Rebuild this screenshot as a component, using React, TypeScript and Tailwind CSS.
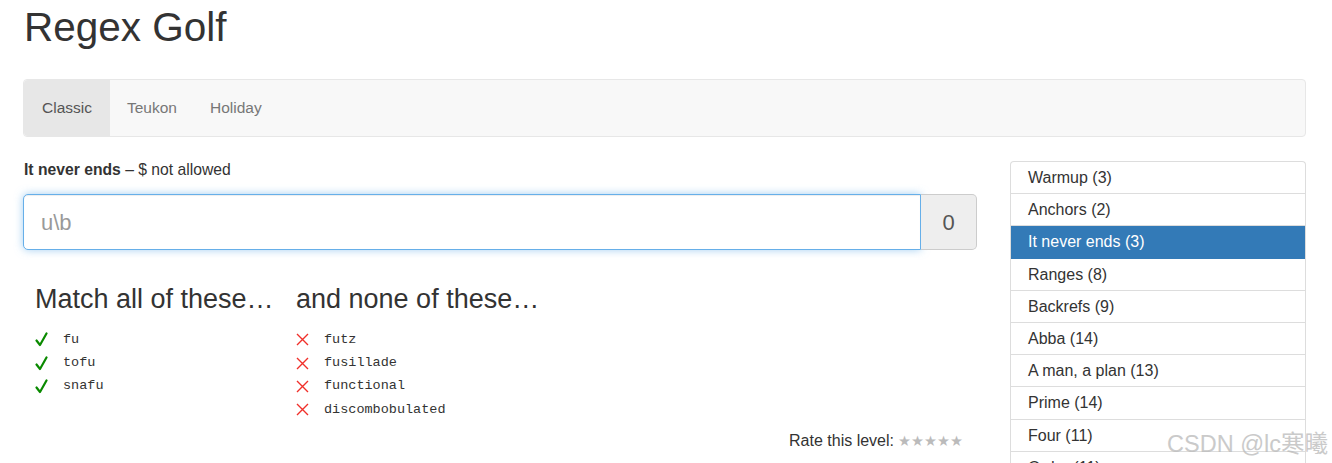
import React from "react";

const levels = [
  "Warmup (3)",
  "Anchors (2)",
  "It never ends (3)",
  "Ranges (8)",
  "Backrefs (9)",
  "Abba (14)",
  "A man, a plan (13)",
  "Prime (14)",
  "Four (11)",
  "Order (11)",
];

const matches = ["fu", "tofu", "snafu"];
const rejects = ["futz", "fusillade", "functional", "discombobulated"];

function Check() {
  return (
    <svg width="13" height="15" viewBox="0 0 13 15" className="shrink-0">
      <path d="M1.5 8.5L5 13L11.5 1.5" stroke="#0a8a00" strokeWidth="2.2" fill="none" strokeLinecap="round" strokeLinejoin="round" />
    </svg>
  );
}

function Cross() {
  return (
    <svg width="13" height="13" viewBox="0 0 13 13" className="shrink-0">
      <path d="M1 1L12 12M12 1L1 12" stroke="#f0302a" strokeWidth="1.4" fill="none" />
    </svg>
  );
}

export default function App() {
  return (
    <div className="relative min-h-[463px] bg-white pl-[23px] pr-[26px] font-['Liberation_Sans',Arial,sans-serif] text-[#333]">
      <h1 className="mt-[5px] pl-px text-[40.5px] leading-[45px] font-normal text-[#333]">Regex Golf</h1>

      <nav className="mt-[29px] flex h-[58px] rounded-[4px] border border-[#e7e7e7] bg-[#f8f8f8] text-[15.5px] text-[#777]">
        <a className="flex items-center rounded-l-[4px] bg-[#e7e7e7] px-[18px] text-[#555]">Classic</a>
        <a className="flex items-center px-[17px]">Teukon</a>
        <a className="flex items-center px-[16px]">Holiday</a>
      </nav>

      <div className="flex gap-[33px]">
        <div className="w-[954px]">
          <p className="mt-[22px] pl-px text-[15.7px] leading-[22px]">
            <b>It never ends</b> – $ not allowed
          </p>

          <div className="mt-[13px] flex h-[56px]">
            <div className="flex flex-1 items-center rounded-l-[5px] border border-[#66afe9] bg-white px-[17px] shadow-[inset_0_1px_1px_rgba(0,0,0,.075),0_0_8px_rgba(102,175,233,.6)]">
              <span className="text-[22px] text-[#999]">u\b</span>
            </div>
            <div className="flex w-[56px] items-center justify-center rounded-r-[5px] border border-l-0 border-[#ccc] bg-[#eee] text-[22px] text-[#555]">
              0
            </div>
          </div>

          <div className="mt-[35px] flex pl-[12px]">
            <div className="w-[261px]">
              <h3 className="text-[27px] leading-[29px] font-normal">Match all of these…</h3>
              <ul className="mt-[14px]">
                {matches.map((m) => (
                  <li key={m} className="flex h-[23.4px] items-center">
                    <span className="w-[28px]">
                      <Check />
                    </span>
                    <span className="font-['Liberation_Mono',monospace] text-[13.5px]">{m}</span>
                  </li>
                ))}
              </ul>
            </div>
            <div>
              <h3 className="text-[27px] leading-[29px] font-normal">and none of these…</h3>
              <ul className="mt-[14px]">
                {rejects.map((m) => (
                  <li key={m} className="flex h-[23.4px] items-center">
                    <span className="w-[28px]">
                      <Cross />
                    </span>
                    <span className="font-['Liberation_Mono',monospace] text-[13.5px]">{m}</span>
                  </li>
                ))}
              </ul>
            </div>
          </div>

          <div className="mt-[8px] flex items-center justify-end pr-[14px] text-[16px] leading-[22px]">
            Rate this level:
            <span className="ml-[4px] font-['DejaVu_Sans',sans-serif] text-[14.5px] text-[#bbb]">★★★★★</span>
          </div>
        </div>

        <div className="mt-[24px] w-[296px]">
          <ul className="overflow-hidden rounded-t-[4px] border border-b-0 border-[#ddd] text-[16px]">
            {levels.map((l) => (
              <li
                key={l}
                className={
                  l.startsWith("It never")
                    ? "border-b border-[#337ab7] bg-[#337ab7] px-[17px] py-[4px] leading-[23.2px] text-white"
                    : "border-b border-[#ddd] px-[17px] py-[4px] leading-[23.2px] text-[#333]"
                }
              >
                {l}
              </li>
            ))}
          </ul>
        </div>
      </div>

      <div className="pointer-events-none absolute top-[422px] right-[4px] font-['Liberation_Sans','Noto_Sans_CJK_SC',sans-serif] text-[23.5px] text-[#bdbdbd] opacity-80">
        CSDN @lc寒曦
      </div>
    </div>
  );
}
